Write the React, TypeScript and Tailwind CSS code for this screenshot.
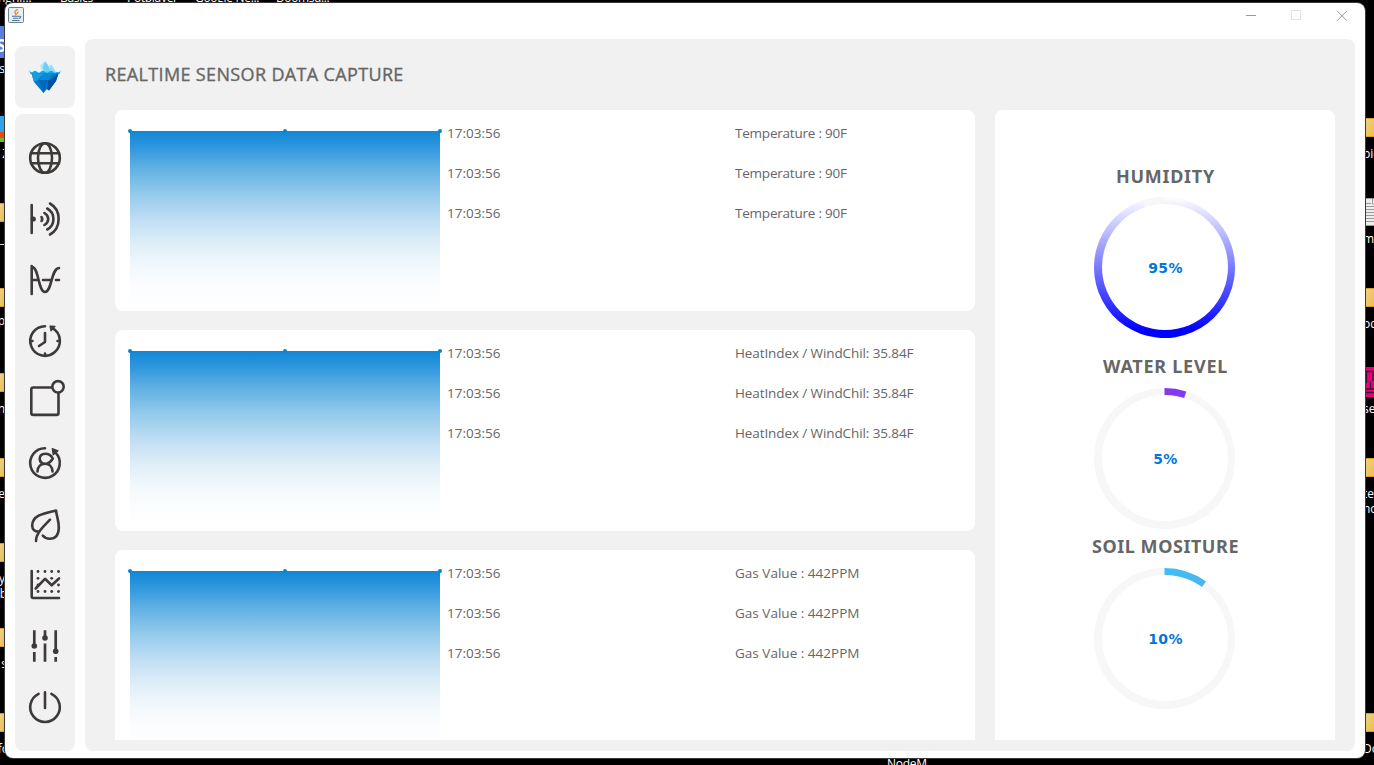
import type { ReactNode } from "react";

const cards = [
  { text: "Temperature : 90F", tracking: "tracking-[-0.22px]" },
  { text: "HeatIndex / WindChil: 35.84F", tracking: "tracking-[-0.1px]" },
  { text: "Gas Value : 442PPM", tracking: "tracking-[0.02px]" },
];

function NavIcon({ children }: { children: ReactNode }) {
  return (
    <svg width="40" height="40" viewBox="0 0 40 40" fill="none" stroke="#3e3a39" strokeWidth="2.6" strokeLinecap="round" strokeLinejoin="round" className="shrink-0 overflow-visible">
      {children}
    </svg>
  );
}

const dots = [[13, 6.5], [20, 6.5], [26.7, 6.5], [33.5, 6.5], [13, 13.3], [26.7, 13.3], [13, 20], [33.5, 20], [13, 26.5], [20, 26.5], [26.7, 26.5], [33.5, 26.5]];

function Sidebar() {
  return (
    <nav className="flex h-[637px] w-[60px] flex-col items-center gap-[21px] rounded-lg bg-[#f1f1f1] pt-6">
      <NavIcon>
        <circle cx="20" cy="20" r="14.8" />
        <ellipse cx="20" cy="20" rx="7" ry="14.8" />
        <path d="M6 15.2H34M6 25.2H34" />
      </NavIcon>
      <NavIcon>
        <path d="M6.7 6V34M25 4.5C36.5 11 36.5 29 25 35.5M22.2 9.5C30.5 14 30.5 26 22.2 30.5M19.4 14C24.5 17 24.5 23 19.4 26M16.5 18Q18 20 16.5 22" />
        <circle cx="8.3" cy="20" r="1.3" />
      </NavIcon>
      <NavIcon>
        <path d="M6.7 6V34M7 7C14 7 13 32 20 32S26 8.5 34 8M7 20H13M18 20H26.5M31 20H34" />
      </NavIcon>
      <NavIcon>
        <path d="M20 5.2A14.8 14.8 0 1 0 27.5 7.2M20 12V21L14 25M5.5 20H7.5M32.5 20H34.5M20 32.5V34.5" />
        <path d="M25 5.2L30 5.4L26 9.8Z" fill="#3e3a39" strokeWidth="1.2" />
      </NavIcon>
      <NavIcon>
        <rect x="6.3" y="5.5" width="27.2" height="27.4" rx="2" />
        <circle cx="33" cy="4.8" r="5.7" fill="#f1f1f1" />
      </NavIcon>
      <NavIcon>
        <path d="M20 5.2A14.8 14.8 0 1 0 30.5 9.6M27.8 15.5C26 12.2 23.4 10.8 20.3 10.8C16.5 10.8 14.5 13 14.7 16C15 19 17 20.8 20.2 20.8C24 20.8 26 18.5 27.8 15.5M12.5 28.5C12.8 23.5 16 20.8 20 20.8S27.2 23.5 27.5 28.5" />
        <path d="M27.2 5.5L33 7.7L28.2 11.8Z" fill="#3e3a39" strokeWidth="1.2" />
      </NavIcon>
      <NavIcon>
        <path d="M31 6.5C18 9.5 7.2 11.5 7.2 21.5C7.2 25.5 9.8 28 14.5 27.6M31 6.5C32 14 34 17 33.8 24C33.6 31 30.5 34.8 24.8 34.8C21.8 34.8 19.5 33.8 17.8 31.5M25 15.7C19 22 11 29 11 37" />
      </NavIcon>
      <NavIcon>
        <path d="M6.7 6V31.5Q6.7 33 8.2 33H34M10.7 23.5L20 13.8L26.7 20.3L34 13.5" />
        {dots.map(([x, y]) => <circle key={`${x}-${y}`} cx={x} cy={y} r="1.4" fill="#3e3a39" stroke="none" />)}
      </NavIcon>
      <NavIcon>
        <path strokeLinecap="butt" strokeWidth="2.7" d="M9.3 4.3V20M9.3 26V35.8M20 4.3V12M20 17.5V35.8M30.7 4.3V25M30.7 31V35.8" />
        <g fill="#3e3a39" stroke="none">
          <circle cx="9.3" cy="20" r="2.8" />
          <circle cx="20" cy="12" r="2.8" />
          <circle cx="30.7" cy="25.3" r="2.8" />
        </g>
      </NavIcon>
      <NavIcon>
        <path d="M13.6 6.8A14.8 14.8 0 1 0 26.4 6.8M20 5.2V21" />
      </NavIcon>
    </nav>
  );
}

function Iceberg() {
  return (
    <svg width="32" height="33" viewBox="0 0 32 33">
      <path d="M5 12L11 4.5L16 0L19.5 5L22 3.5L27.5 12Z" fill="#b5e8fc" />
      <path d="M16 0L19.5 5L22 12H16L13.5 7Z" fill="#6fd0f5" />
      <path d="M11 4.5L12.5 9L9 12H5Z" fill="#e2f8ff" />
      <path d="M22 3.5L27.5 12H23L20.5 8Z" fill="#8adcf8" />
      <path d="M0 9Q2 12.5 4 10.7Q6 8.8 8 10.7T12 10.7T16 10.7T20 10.7T24 10.7T28 10.7Q30.5 12.3 32 9L30.5 13H1.5Z" fill="#10a6e8" />
      <path d="M2.5 12.5H29.5L27 20L20 29.5L18 28L14.5 32L5 21Z" fill="#0077c8" />
      <path d="M2.5 12.5H15L9 18.5L5 21Z" fill="#159de0" />
      <path d="M15 12.5H24L19 20H9Z" fill="#078bd8" />
      <path d="M29.5 12.5L27 20L20 29.5L18 28L19 20L24 17Z" fill="#00529e" />
      <path d="M9 19H19L14.5 32Z" fill="#0069b9" />
    </svg>
  );
}

function JavaIcon() {
  return (
    <svg width="16" height="16" viewBox="0 0 16 16" fill="none">
      <rect x=".5" y=".5" width="15" height="15" rx="1" fill="#e9eef3" stroke="#6a8296" />
      <path d="M9.8 2.3C7 4 6 5 7.6 6.5Q8.5 7.6 7.4 8.5M10.7 4.8C8.6 5.8 8.7 6.3 9 7.2" stroke="#e88124" strokeWidth="1.2" />
      <path d="M4 9.3H11M5 11.3H10.3M4 13.5H11.5M11 9.2Q13.6 9 12.4 10.7L10.8 11.5" stroke="#4c7897" strokeWidth="1.1" />
    </svg>
  );
}

function AreaChart({ id }: { id: string }) {
  return (
    <svg width="316" height="182" viewBox="0 0 316 182" className="shrink-0">
      <defs>
        <linearGradient id={id} x1="0" y1="0" x2="0" y2="1">
          <stop offset="0" stopColor="#0f87d7" />
          <stop offset=".1" stopColor="#3399de" />
          <stop offset=".2" stopColor="#5dafe3" />
          <stop offset=".35" stopColor="#93caeb" />
          <stop offset=".5" stopColor="#c1def4" />
          <stop offset=".62" stopColor="#dcedf8" />
          <stop offset=".75" stopColor="#f1f8fc" />
          <stop offset=".87" stopColor="#fcfdff" />
          <stop offset="1" stopColor="#fff" />
        </linearGradient>
      </defs>
      <rect x="3" y="3" width="310" height="179" fill={`url(#${id})`} />
      {[3, 158, 313].map((x) => <circle key={x} cx={x} cy="3" r="2" fill="#0785d4" />)}
    </svg>
  );
}

function Gauge({ title, value, from, to, heading }: { title: string; value: number; from: string; to: string; heading: string }) {
  const angle = (value / 100) * 2 * Math.PI;
  const x = 70.5 + 70.5 * Math.sin(angle);
  const y = 70.5 - 70.5 * Math.cos(angle);
  const id = `gauge-${value}`;
  return (
    <section className="flex w-[339px] flex-col items-center">
      <h2 className={`h-6 whitespace-nowrap pl-0.5 font-['Noto_Sans',sans-serif] text-[18px] leading-6 font-bold text-[#666] ${heading}`}>{title}</h2>
      <div className="mt-[9px] grid h-[141px] w-[141px] place-items-center">
        <svg width="141" height="141" viewBox="0 0 141 141" className="col-start-1 row-start-1">
          <defs>
            <linearGradient id={id} gradientUnits="userSpaceOnUse" x1="0" y1="0" x2="0" y2="141">
              <stop offset="0" stopColor={from} />
              <stop offset=".95" stopColor={to} />
            </linearGradient>
          </defs>
          <circle cx="70.5" cy="70.5" r="70.5" fill="#f7f7f7" />
          <path d={`M70.5 70.5V0A70.5 70.5 0 ${value > 50 ? 1 : 0} 1 ${x} ${y}Z`} fill={`url(#${id})`} />
          <circle cx="71" cy="70" r="63" fill="#fff" />
        </svg>
        <span className="col-start-1 row-start-1 pl-0.5 font-['DejaVu_Sans',sans-serif] text-[14px] leading-5 font-bold tracking-[0.3px] text-[#0078d7]">{value}%</span>
      </div>
    </section>
  );
}

const label = "absolute whitespace-nowrap text-[12px] leading-4 text-white";
const leftFolders = ["top-[203px]", "top-[288px]", "top-[373px]", "top-[458px]", "top-[543px]", "top-[628px]", "top-[713px]"];
const rightFolders = ["top-[118px]", "top-[288px]", "top-[458px]", "top-[713px]"];
const leftText = [
  ["s", "top-[61px] right-0"],
  ["Z", "top-[146px] -right-1"],
  ["_", "top-[231px] right-0"],
  ["p", "top-[313px] right-0"],
  ["n", "top-[401px] right-0"],
  ["e", "top-[486px] right-0"],
  ["y", "top-[571px] right-0"],
  ["b", "top-[586px] -right-0.5"],
  ["s", "top-[656px] -right-0.5"],
  ["fo", "top-[741px] -right-1"],
];
const rightText = [["pic", "top-[146px]"], ["ma", "top-[231px]"], ["od", "top-[316px]"], ["se", "top-[401px]"], ["te", "top-[486px]"], ["no", "top-[501px]"], ["Do", "top-[741px]"]];

function Desktop() {
  return (
    <>
      <div className="absolute top-0 left-0 h-[765px] w-[5px] overflow-hidden">
        <div className="absolute top-[26px] h-8 w-full bg-[#587fdb]" />
        <span className="absolute top-[33px] right-[-1px] text-[18px] leading-6 font-bold text-white">S</span>
        <div className="absolute top-[116px] h-[16px] w-full bg-[#2fa5e5]" />
        <div className="absolute top-[132px] h-[6px] w-full bg-[#e34c17]" />
        <div className="absolute top-[138px] h-[4px] w-full bg-[#76b82a]" />
        {leftFolders.map((p) => <div key={p} className={`absolute h-[19px] w-full border-y border-[#dc9e25] bg-linear-to-br from-[#eed184] to-[#e7bb45] ${p}`} />)}
        {leftText.map(([t, p]) => <span key={p} className={`${label} ${p}`}>{t}</span>)}
      </div>
      <div className="absolute top-0 right-0 h-[765px] w-[9px] overflow-hidden">
        {rightFolders.map((p) => <div key={p} className={`absolute h-[19px] w-full border-y border-[#dc9e25] bg-linear-to-br from-[#eed184] to-[#efbf42] ${p}`} />)}
        <svg className="absolute top-[198px]" width="9" height="28">
          <rect width="9" height="28" fill="#ededed" />
          <path d="M0 .5H9M0 5.5H6M7.5 0V6H9M0 8.5H9M0 11.5H9M0 14.5H9M0 17.5H9M0 20.5H9M0 23.5H9M0 27.5H9" stroke="#9a9a9a" fill="none" />
        </svg>
        <svg className="absolute top-[367px]" width="9" height="30">
          <rect width="9" height="30" fill="#e6007e" />
          <path d="M0 4.5H9M1.5 5V16M0 22H9M5.5 22V14M8 14V5M0 25.5H9" stroke="#35142a" strokeWidth="1.3" fill="none" />
        </svg>
        {rightText.map(([t, p]) => <span key={p} className={`${label} left-[-2px] ${p}`}>{t}</span>)}
      </div>
      <span className={`${label} top-[-10px] left-[-2px]`}>nghi...</span>
      <span className={`${label} top-[-10px] left-[60px] tracking-[-0.3px]`}>Basics</span>
      <span className={`${label} top-[-10px] left-[127px] tracking-[-0.3px]`}>Potplayer</span>
      <span className={`${label} top-[-10px] left-[195px] tracking-[-0.3px]`}>Google Ne...</span>
      <span className={`${label} top-[-10px] left-[276px] tracking-[-0.4px]`}>Doomsd...</span>
      <span className={`${label} top-[756px] left-[887px] tracking-[-0.3px]`}>NodeM</span>
    </>
  );
}

export default function App() {
  return (
    <div className="relative h-[765px] w-[1374px] overflow-hidden bg-black pt-[3px] pl-[5px] font-['Open_Sans',sans-serif] text-[#666]">
      <Desktop />
      <div className="relative flex h-[755px] w-[1360px] flex-col overflow-hidden rounded-lg bg-white shadow-[0_0_0_1px_#3b3b3b]">
        <header className="flex h-9 shrink-0 items-start justify-between pt-1 pr-[18px] pl-[3px]">
          <JavaIcon />
          <svg width="102" height="12" viewBox="0 0 102 12" className="mt-[3px]" fill="none" stroke="#999">
            <path d="M1 5.5H11M92 .8L102 10.8M102 .8L92 10.8" />
            <rect x="46.5" y=".5" width="9" height="9" stroke="#e5e5e5" />
          </svg>
        </header>
        <div className="flex gap-[10px] pr-[10px] pl-[10px]">
          <aside className="flex flex-col gap-[6px] pt-[7px]">
            <div className="flex h-[62px] w-[60px] items-center justify-center rounded-lg bg-[#f1f1f1]">
              <Iceberg />
            </div>
            <Sidebar />
          </aside>
          <main className="h-[712px] w-[1270px] rounded-lg bg-[#f1f1f1] px-5 pt-[23px]">
            <h1 className="h-6 text-[18px] leading-6 whitespace-nowrap tracking-[0.35px] [-webkit-text-stroke:0.35px_#666]">REALTIME SENSOR DATA CAPTURE</h1>
            <div className="mt-6 ml-[10px] flex h-[630px] gap-5 overflow-hidden">
              <div className="flex w-[860px] flex-col gap-[19px]">
                {cards.map((card, i) => (
                  <article key={card.text} className="flex h-[201px] shrink-0 items-start overflow-hidden rounded-lg bg-white pt-[18px] pl-3">
                    <AreaChart id={`area-${i}`} />
                    <ul className="mt-[-5px] ml-1 flex flex-col gap-5 text-[13.5px] leading-5">
                      {[0, 1, 2].map((row) => (
                        <li key={row} className="flex whitespace-nowrap">
                          <time className="w-[288px]">17:03:56</time>
                          <span className={card.tracking}>{card.text}</span>
                        </li>
                      ))}
                    </ul>
                  </article>
                ))}
              </div>
              <div className="flex h-[660px] w-[340px] flex-col items-start rounded-lg bg-white pt-[54px]">
                <Gauge title="HUMIDITY" value={95} from="#ffffff" to="#0000ff" heading="tracking-[0.7px]" />
                <div className="mt-[17px]">
                  <Gauge title="WATER LEVEL" value={5} from="#8538ed" to="#8538ed" heading="-translate-y-px tracking-[0.75px]" />
                </div>
                <div className="mt-[6px]">
                  <Gauge title="SOIL MOSITURE" value={10} from="#42bdf5" to="#777da8" heading="-translate-y-px tracking-[0.55px]" />
                </div>
              </div>
            </div>
          </main>
        </div>
      </div>
    </div>
  );
}
